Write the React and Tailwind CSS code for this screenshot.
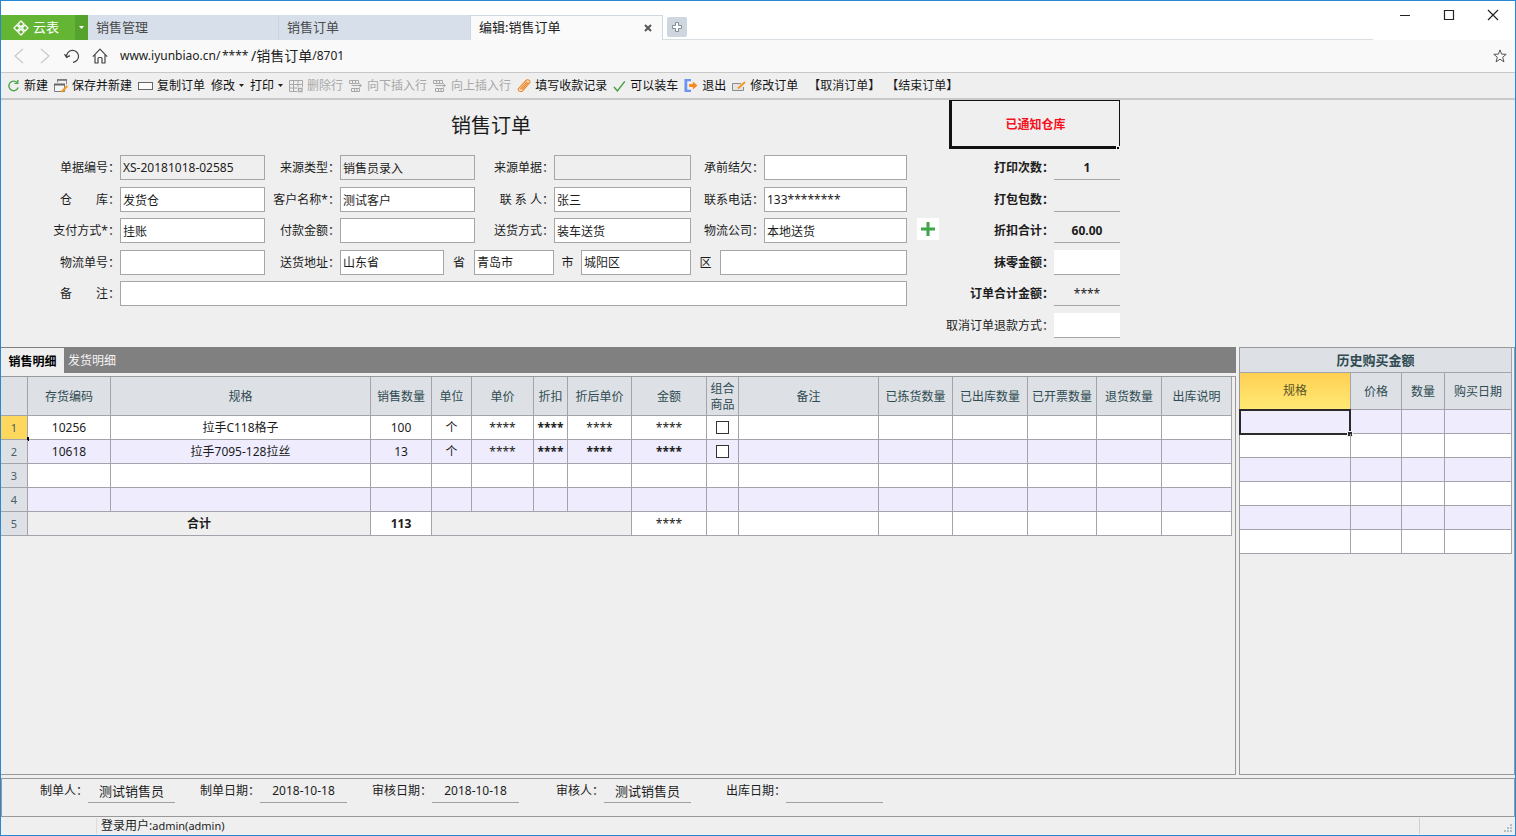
import React from "react";

/* ---------- icons ---------- */

function LogoIcon() {
    return (
        <svg width="16" height="16" viewBox="0 0 16 16" fill="none" stroke="#fff" strokeWidth="1.4" strokeLinejoin="round">
            <path d="M8 1 L11 4 L8 7 L5 4 Z" />
            <path d="M12 5 L15 8 L12 11 L9 8 Z" />
            <path d="M8 9 L11 12 L8 15 L5 12 Z" />
            <path d="M4 5 L7 8 L4 11 L1 8 Z" />
        </svg>
    );
}

function Chevron({ dir }) {
    return (
        <svg width="10" height="16" viewBox="0 0 10 16" fill="none" stroke="#c9c9c9" strokeWidth="1.2">
            <path d={dir === "left" ? "M9 1 L1 8 L9 15" : "M1 1 L9 8 L1 15"} />
        </svg>
    );
}

function UndoIcon() {
    return (
        <svg width="16" height="16" viewBox="0 0 16 16" fill="none" stroke="#444" strokeWidth="1.2">
            <path d="M2.6 9 A6 6 0 1 1 9 14.3" />
            <path d="M0.5 6.2 L2.6 9.4 L6 7.6" />
        </svg>
    );
}

function HomeIcon() {
    return (
        <svg width="16" height="16" viewBox="0 0 16 16" fill="none" stroke="#444" strokeWidth="1.2" strokeLinejoin="round">
            <path d="M0.8 8.6 L8 1.2 L15.2 8.6" />
            <path d="M3 7 V15 H6 V10.5 Q6 9.5 7 9.5 H9 Q10 9.5 10 10.5 V15 H13 V7" />
        </svg>
    );
}

function StarIcon() {
    return (
        <svg width="14" height="14" viewBox="0 0 14 14" fill="none" stroke="#555" strokeWidth="1">
            <path d="M7 0.9 L8.6 5.1 L13.2 5.3 L9.7 8.2 L10.9 12.9 L7 10.2 L3.1 12.9 L4.3 8.2 L0.8 5.3 L5.4 5.1 Z" />
        </svg>
    );
}

function RefreshIcon() {
    return (
        <svg width="13" height="14" viewBox="0 0 13 14" fill="none" stroke="#4fa64f" strokeWidth="1.4">
            <path d="M10.2 3.6 A4.8 4.8 0 1 0 11.2 8.6" />
            <path d="M10.8 1 V4.4 H7.4" />
        </svg>
    );
}

function SaveIcon() {
    return (
        <svg width="14" height="14" viewBox="0 0 14 14" fill="none">
            <path d="M3.5 3.5 V0.5 H12.5 V5.5" stroke="#8a8a8a" />
            <path d="M3 1 H13" stroke="#777" strokeWidth="1.6" />
            <path d="M0.5 5.5 H10.5 V12.5 H0.5 Z" fill="#f4f4f4" stroke="#7a7a7a" />
            <path d="M0 5.5 H11" stroke="#666" strokeWidth="2" />
            <path d="M7.4 13 L13.4 7" stroke="#f59a23" strokeWidth="2" />
        </svg>
    );
}

function CopyIcon() {
    return (
        <svg width="15" height="14" viewBox="0 0 15 14">
            <rect x="0.5" y="3.5" width="14" height="7" fill="#fafafa" stroke="#666" />
        </svg>
    );
}

function DeleteRowIcon() {
    return (
        <svg width="14" height="14" viewBox="0 0 14 14" fill="none" stroke="#a8a8a8">
            <path d="M0.5 1.5 H13.5 V5.5 H0.5 Z M0.5 5.5 V12.5 H8 M4.5 1.5 V12.5 M9 1.5 V8 M0.5 9 H8.5 M13.5 5.5 V8" />
            <path d="M9.5 9.5 H13 V12.5 H9.5 Z" strokeWidth="1.3" />
        </svg>
    );
}

function InsertRowIcon() {
    return (
        <svg width="14" height="14" viewBox="0 0 14 14" fill="none" stroke="#a8a8a8">
            <path d="M0.5 1.5 H9.5 V4.5 H0.5 Z M3.5 1.5 V4.5 M6.5 1.5 V4.5" />
            <path d="M2.5 6.5 H12 M10 4.5 L12.5 6.5 L10 8.5" />
            <path d="M2.5 9.5 H10.5 V12.5 H2.5 Z M5.5 9.5 V12.5 M8 9.5 V12.5" />
        </svg>
    );
}

function ClipIcon() {
    return (
        <svg width="14" height="15" viewBox="0 0 15 15" fill="none" stroke="#f08019" strokeWidth="1.1" strokeLinecap="round">
            <path d="M1.2 11.4 L9.6 2 C11 0.6 14.6 1.6 13.8 4.4 L6 13.2 C4.6 14.6 1.4 14 1.2 11.4 Z" />
            <path d="M3.6 11.4 L10.6 3.6 M5.6 11.4 L12 4.4" />
        </svg>
    );
}

function CheckIcon() {
    return (
        <svg width="13" height="14" viewBox="0 0 13 14" fill="none" stroke="#3f9e3f" strokeWidth="1.4">
            <path d="M1 8 L4.4 12 L11.8 2.4" />
        </svg>
    );
}

function ExitIcon() {
    return (
        <svg width="14" height="15" viewBox="0 0 15 15">
            <path d="M0.5 0.5 H7.5 V3 H3.5 V12 H7.5 V14.5 H0.5 Z" fill="#6b93f2" />
            <path d="M5.5 6 H9.5 V3.2 L14.5 7.5 L9.5 11.8 V9 H5.5 Z" fill="#f58a1f" />
        </svg>
    );
}

function EditIcon() {
    return (
        <svg width="14" height="14" viewBox="0 0 14 14" fill="none">
            <path d="M9 4.5 H0.5 V11.5 H11.5 V8" fill="#e4e4e4" stroke="#8a8a8a" />
            <path d="M6 9.6 L13 3" stroke="#f59a23" strokeWidth="2" />
        </svg>
    );
}

function CaretDown({ color = "#222" }) {
    return (
        <svg width="5" height="3" viewBox="0 0 5 3">
            <path d="M0 0 H5 L2.5 3 Z" fill={color} />
        </svg>
    );
}

/* ---------- window chrome ---------- */

function TitleBar() {
    return (
        <header className="flex h-[39px] bg-white">
            <div className="flex items-end">
                <button className="flex h-[25px] w-[74px] items-center gap-1 pl-3 text-[13px] text-white bg-[#64b534]">
                    <LogoIcon />
                    云表
                </button>
                <button aria-label="菜单" className="flex h-[25px] w-[13px] items-center justify-center bg-[#55a32c]">
                    <CaretDown color="#fff" />
                </button>
                <nav className="flex h-[25px] text-[13px] text-[#4a4a4a]">
                    <button className="w-[191px] border-r border-[#ccd4de] bg-[#d6dfea] px-2 text-left">销售管理</button>
                    <button className="w-[191px] bg-[#d6dfea] px-2 text-left">销售订单</button>
                    <div className="flex w-[193px] items-center justify-between border-x border-t border-[#cdd9e2] bg-[#fafafa] pl-2 pr-1.5">
                        <button className="text-[#222]">编辑:销售订单</button>
                        <button aria-label="关闭标签" className="flex w-4 justify-center">
                            <svg width="8" height="8" viewBox="0 0 8 8" stroke="#555" strokeWidth="2">
                                <path d="M1 1 L7 7 M7 1 L1 7" />
                            </svg>
                        </button>
                    </div>
                </nav>
            </div>
            <div className="mr-[142px] flex flex-1 items-end border-b border-[#d9dfe2] pl-1 pb-0.5">
                <button aria-label="新标签" className="flex h-5 w-5 items-center justify-center rounded-xs bg-[#ced7df]">
                    <svg width="12" height="12" viewBox="0 0 12 12">
                        <path d="M4.5 1.5 H7.5 V4.5 H10.5 V7.5 H7.5 V10.5 H4.5 V7.5 H1.5 V4.5 H4.5 Z" fill="#fff" stroke="#858e96" />
                    </svg>
                </button>
            </div>
            <div className="absolute right-4 top-2 flex gap-8">
                <button aria-label="最小化">
                    <svg width="12" height="12" viewBox="0 0 12 12" stroke="#222"><path d="M1 6.5 H11" /></svg>
                </button>
                <button aria-label="最大化">
                    <svg width="12" height="12" viewBox="0 0 12 12" fill="none" stroke="#222"><path d="M1.5 1.5 H10.5 V10.5 H1.5 Z" strokeWidth="1.2" /></svg>
                </button>
                <button aria-label="关闭">
                    <svg width="12" height="12" viewBox="0 0 12 12" stroke="#222"><path d="M1 1 L11 11 M11 1 L1 11" strokeWidth="1.2" /></svg>
                </button>
            </div>
        </header>
    );
}

function AddressBar() {
    return (
        <div className="flex h-8 items-center bg-[#f9f9f9] pl-[13px] pr-2">
            <button aria-label="后退"><Chevron dir="left" /></button>
            <button aria-label="前进" className="ml-4"><Chevron dir="right" /></button>
            <button aria-label="刷新" className="ml-3.5"><UndoIcon /></button>
            <button aria-label="主页" className="ml-3"><HomeIcon /></button>
            <div className="ml-3 flex flex-1 items-center text-[#222]">
                <span className="w-[102px]">www.iyunbiao.cn/</span>
                <span className="w-[29px]">****</span>
                <span className="text-sm leading-4">/销售订单</span>
                <span>/8701</span>
            </div>
            <button aria-label="收藏"><StarIcon /></button>
        </div>
    );
}

const TOOLS = [
    { text: "新建", icon: RefreshIcon },
    { text: "保存并新建", icon: SaveIcon },
    { text: "复制订单", icon: CopyIcon },
    { text: "修改", menu: true },
    { text: "打印", menu: true },
    { text: "删除行", icon: DeleteRowIcon, disabled: true },
    { text: "向下插入行", icon: InsertRowIcon, disabled: true },
    { text: "向上插入行", icon: InsertRowIcon, disabled: true },
    { text: "填写收款记录", icon: ClipIcon },
    { text: "可以装车", icon: CheckIcon },
    { text: "退出", icon: ExitIcon },
    { text: "修改订单", icon: EditIcon },
];

function Toolbar() {
    return (
        <div className="flex h-7 items-center gap-1.5 border-t border-b-2 border-[#c8c8c8] px-1.5 whitespace-nowrap">
            {TOOLS.map(({ text, icon: Icon, menu, disabled }) => (
                <button key={text} disabled={disabled} className="flex items-center gap-1 text-[#111] disabled:text-[#a8a8a8]">
                    {Icon && <Icon />}
                    {text}
                    {menu && <CaretDown />}
                </button>
            ))}
            <button className="ml-1">【取消订单】</button>
            <button>【结束订单】</button>
        </div>
    );
}

/* ---------- order form ---------- */

const box = "h-[25px] w-full min-w-0 border border-[#a6a6a6] bg-white px-0.5 outline-none read-only:bg-[#efefef]";

function Field({ id, label, value = "", readOnly = false }) {
    return (
        <>
            <label htmlFor={id} className="h-[25px] text-right leading-[25px] whitespace-pre">{label}：</label>
            <input id={id} defaultValue={value} readOnly={readOnly} className={box} />
        </>
    );
}

function Total({ id, label, value = "", editable = false, light = false }) {
    return (
        <>
            <label htmlFor={id} className={"col-start-10 flex h-[25px] items-center justify-end whitespace-nowrap " + (light ? "" : "font-bold")}>
                {label}：
            </label>
            <input
                id={id}
                defaultValue={value}
                readOnly={!editable}
                className={
                    "h-[25px] w-full min-w-0 border-b border-[#a6a6a6] bg-white text-center outline-none read-only:bg-transparent " +
                    (value === "****" ? "" : "font-bold")
                }
            />
        </>
    );
}

function OrderForm() {
    return (
        <form className="grid grid-cols-[119px_145px_75px_135px_79px_137px_73px_143px_42px_105px_66px] grid-rows-[55px_32px_31px_32px_31px_32px_34px] items-start">
            <h1 className="col-span-9 pt-3 pl-8 text-center text-xl leading-7">销售订单</h1>
            <div className="relative col-span-2 flex h-[49px] items-center justify-center border border-b-3 border-l-3 border-[#111] pt-0.5 font-bold text-[#f5101c]">
                已通知仓库
                <span className="absolute -right-px -bottom-1 size-1 border border-[#efefef] bg-black" />
            </div>

            <Field id="code" label="单据编号" value="XS-20181018-02585" readOnly />
            <Field id="srcType" label="来源类型" value="销售员录入" readOnly />
            <Field id="srcDoc" label="来源单据" readOnly />
            <Field id="debt" label="承前结欠" />
            <Total id="prints" label="打印次数" value="1" />

            <Field id="store" label="仓　　库" value="发货仓" />
            <Field id="customer" label="客户名称*" value="测试客户" />
            <Field id="contact" label="联 系 人" value="张三" />
            <Field id="phone" label="联系电话" value="133********" />
            <Total id="packs" label="打包包数" />

            <Field id="payType" label="支付方式*" value="挂账" />
            <Field id="paid" label="付款金额" />
            <Field id="shipType" label="送货方式" value="装车送货" />
            <Field id="carrier" label="物流公司" value="本地送货" />
            <button type="button" aria-label="添加物流公司" className="flex size-[22px] items-center justify-center self-start justify-self-center bg-white">
                <svg width="16" height="16" viewBox="0 0 16 16" stroke="#3fa648" strokeWidth="3">
                    <path d="M8 1 V15 M1 8 H15" />
                </svg>
            </button>
            <Total id="discount" label="折扣合计" value="60.00" />

            <Field id="shipNo" label="物流单号" />
            <label htmlFor="province" className="text-right leading-[25px]">送货地址：</label>
            <div className="col-span-5 grid grid-cols-[104px_30px_80px_27px_110px_29px_1fr] text-center leading-[25px]">
                <input id="province" defaultValue="山东省" className={box} />
                <label htmlFor="province">省</label>
                <input id="city" defaultValue="青岛市" className={box} />
                <label htmlFor="city">市</label>
                <input id="district" defaultValue="城阳区" className={box} />
                <label htmlFor="district">区</label>
                <input aria-label="详细地址" className={box} />
            </div>
            <Total id="round" label="抹零金额" editable />

            <label htmlFor="remark" className="text-right leading-[25px]">备　　注：</label>
            <div className="col-span-7">
                <input id="remark" className={box} />
            </div>
            <Total id="sum" label="订单合计金额" value="****" />
            <Total id="refund" label="取消订单退款方式" editable light />
        </form>
    );
}

/* ---------- detail tables ---------- */

const COLUMNS = [
    ["存货编码", "w-[83px]"],
    ["规格", "w-[260px]"],
    ["销售数量", "w-[61px]"],
    ["单位", "w-[40px]"],
    ["单价", "w-[62px]"],
    ["折扣", "w-[34px]"],
    ["折后单价", "w-[64px]"],
    ["金额", "w-[75px]"],
    ["组合商品", "w-[32px]"],
    ["备注", ""],
    ["已拣货数量", "w-[74px]"],
    ["已出库数量", "w-[75px]"],
    ["已开票数量", "w-[69px]"],
    ["退货数量", "w-[65px]"],
    ["出库说明", "w-[70px]"],
];

const ROWS = [
    ["10256", "拉手C118格子", "100", "个", "****", "****", "****", "****"],
    ["10618", "拉手7095-128拉丝", "13", "个", "****", "****", "****", "****"],
    [],
    [],
];

const cell = "h-6 border-r border-b border-[#a3a3ab] p-0 leading-4";
const head = "border-r border-b border-[#a3a3ab] bg-[#dde1e6] px-0 pt-0.5 pb-0 font-normal leading-4 text-[#2f4a50]";

function DetailTable() {
    return (
        <table className="w-full table-fixed border-separate border-spacing-0 text-center">
            <thead>
                <tr className="h-[39px]">
                    <th className={head + " w-[27px]"} />
                    {COLUMNS.map(([name, width]) => (
                        <th key={name} className={head + " " + width}>
                            {name === "组合商品" ? <>组合<br />商品</> : <span className="-mx-1 whitespace-nowrap">{name}</span>}
                        </th>
                    ))}
                </tr>
            </thead>
            <tbody>
                {ROWS.map((row, r) => (
                    <tr key={r} className={r % 2 ? "bg-[#eeecfd]" : "bg-white"}>
                        <th className={cell + " relative text-[11px] font-normal text-[#4b5d66] " + (r === 0 ? "bg-[#fdd85c]" : "bg-[#dde1e6]")}>
                            {r + 1}
                            {r === 0 && <span className="absolute -right-0.5 -bottom-0.5 h-1 w-0.5 bg-black" />}
                        </th>
                        {COLUMNS.map(([name], c) => (
                            <td key={name} className={cell + (c === 5 || (r === 1 && c > 5) ? " font-bold" : "")}>
                                {c === 8 && row.length > 0 ? (
                                    <input
                                        type="checkbox"
                                        aria-label={"组合商品 " + (r + 1)}
                                        className="block size-[13px] mx-auto appearance-none border border-[#333] bg-white"
                                    />
                                ) : (
                                    row[c]
                                )}
                            </td>
                        ))}
                    </tr>
                ))}
                <tr className="bg-white">
                    <th className={cell + " bg-[#dde1e6] text-[11px] font-normal text-[#4b5d66]"}>5</th>
                    <td colSpan={2} className={cell + " bg-[#efefef] font-bold"}>合计</td>
                    <td className={cell + " font-bold"}>113</td>
                    <td colSpan={4} className={cell + " bg-[#efefef]"} />
                    <td className={cell}>****</td>
                    {COLUMNS.slice(8).map(([name]) => (
                        <td key={name} className={cell} />
                    ))}
                </tr>
            </tbody>
        </table>
    );
}

function HistoryTable() {
    return (
        <table className="w-full table-fixed border-separate border-spacing-0 text-center">
            <colgroup>
                <col className="w-[111px]" />
                <col className="w-[51px]" />
                <col className="w-[43px]" />
                <col />
            </colgroup>
            <thead>
                <tr className="h-[25px]">
                    <th colSpan={4} className="border-r border-b border-[#a3a3ab] bg-[#dde1e6] p-0 text-[13px] font-bold leading-4 text-[#2f4a50]">历史购买金额</th>
                </tr>
                <tr className="h-[37px]">
                    <th className="border-r border-b border-[#a3a3ab] bg-linear-to-b from-[#ffd052] to-[#ffe974] p-0 font-normal text-[#5a5326]">规格</th>
                    <th className={head}>价格</th>
                    <th className={head}>数量</th>
                    <th className={head}>购买日期</th>
                </tr>
            </thead>
            <tbody>
                {[0, 1, 2, 3, 4, 5].map((r) => (
                    <tr key={r} className={r % 2 ? "bg-white" : "bg-[#eeecfd]"}>
                        <td className={cell + " relative"}>
                            {r === 0 && (
                                <span className="absolute -inset-x-px -top-px -bottom-0.5 border-2 border-[#2b2929]">
                                    <span className="absolute -right-1 -bottom-1 size-1.5 border border-[#efefef] bg-[#2b2929]" />
                                </span>
                            )}
                        </td>
                        <td className={cell} />
                        <td className={cell} />
                        <td className={cell} />
                    </tr>
                ))}
            </tbody>
        </table>
    );
}

/* ---------- footer ---------- */

const SIGNERS = [
    { id: "maker", label: "制单人", value: "测试销售员", big: true },
    { id: "madeAt", label: "制单日期", value: "2018-10-18" },
    { id: "checkedAt", label: "审核日期", value: "2018-10-18" },
    { id: "checker", label: "审核人", value: "测试销售员", big: true },
    { id: "outAt", label: "出库日期", value: "" },
];

function Signatures() {
    return (
        <div className="mt-[3px] grid h-[39px] grid-cols-[86px_87px_85px_87px_85px_87px_85px_87px_95px_97px] items-start border border-[#999]">
            {SIGNERS.map(({ id, label, value, big }) => (
                <React.Fragment key={id}>
                    <label htmlFor={id} className="text-right leading-6">{label}：</label>
                    <input
                        id={id}
                        readOnly
                        value={value}
                        className={"h-6 w-full min-w-0 border-b border-[#a0a0a0] bg-transparent text-center outline-none " + (big ? "text-[13px]" : "")}
                    />
                </React.Fragment>
            ))}
        </div>
    );
}

export default function App() {
    return (
        <div className="relative flex min-h-screen flex-col border border-[#2787d3] bg-[#efefef] font-['Noto_Sans','Noto_Sans_CJK_SC',sans-serif] text-xs text-[#1c1c1c]">
            <TitleBar />
            <AddressBar />
            <Toolbar />
            <OrderForm />
            <main className="flex flex-1 gap-[3px]">
                <section className="flex flex-1 flex-col">
                    <div className="flex h-[26px] bg-[#808080]">
                        <button className="w-[63px] border-t border-[#808080] bg-[#efefef] pt-0.5 text-center font-bold whitespace-nowrap text-black">销售明细</button>
                        <button className="px-1 pt-0.5 text-[#f5f5f5]">发货明细</button>
                    </div>
                    <div className="mt-[3px] flex-1 border-t border-r border-b border-[#999] pr-[3px]">
                        <DetailTable />
                    </div>
                </section>
                <aside className="w-[276px] border border-[#999] pr-0.5">
                    <HistoryTable />
                </aside>
            </main>
            <Signatures />
            <footer className="flex h-[18px] items-center leading-4">
                <span className="ml-[95px] flex-1 border-l border-[#dcdcdc] pl-1">
                    登录用户:<span className="text-[11px]">admin(admin)</span>
                </span>
                <span className="flex h-4 w-24 items-end justify-end border-l border-[#d0d0d0] p-0.5">
                    <svg width="9" height="9" viewBox="0 0 9 9" fill="#b3c0c8">
                        <path d="M0 7h2v2H0z M3 7h2v2H3z M6 7h2v2H6z M3 4h2v2H3z M6 4h2v2H6z M6 1h2v2H6z" />
                    </svg>
                </span>
            </footer>
        </div>
    );
}
